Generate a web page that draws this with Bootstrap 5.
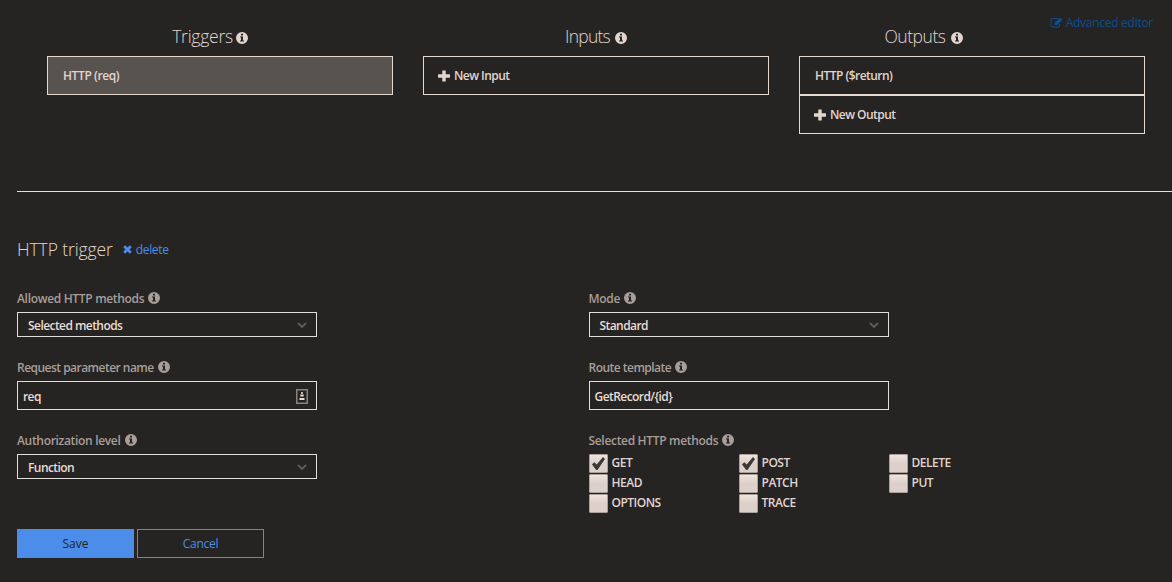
<!DOCTYPE html>
<html lang="en" data-bs-theme="dark">
<head>
<meta charset="utf-8">
<meta name="viewport" content="width=device-width, initial-scale=1">
<title>Function integration</title>
<link href="https://cdn.jsdelivr.net/npm/bootstrap@5.3.0/dist/css/bootstrap.min.css" rel="stylesheet">
<style>
body{background:#252422;color:#e2d5cf;font-family:"Open Sans","Noto Sans",sans-serif;font-size:12px;line-height:16px;height:582px;overflow:hidden}
svg{display:block;flex:none;fill:currentColor}
a{text-decoration:none}
.top-pane{height:191px;padding:25px 27px 0 47px}
.top-grid{display:grid;grid-template-columns:repeat(3,346px);gap:30px}
.col-title{font-size:17.5px;font-weight:300;line-height:22px;height:22px;margin:0 0 9px;color:#e2d5cf}
.col-title svg{margin-top:4px}
.triggers{letter-spacing:-.25px;gap:3px;padding-right:20px}
.inputs{letter-spacing:-.75px;gap:5px}
.outputs{letter-spacing:-.45px;gap:5px;padding-right:97px}
.slot{height:39px;border:1px solid #e6d9d0;padding:0 15px;gap:4px;font-weight:600;color:#e2d5cf;letter-spacing:-.53px}
.slot svg{margin-left:-1px}
.slot:hover{color:#fff}
.slot.active{background:#595350;letter-spacing:-.4px}
.adv{position:absolute;right:19px;top:15px;color:#0a4f94;gap:3px;letter-spacing:-.27px}
.rule{height:1px;background:#e9dcd4;margin-left:17px}
.lower{padding:45px 0 0 17px}
.sec-title{font-size:17.5px;font-weight:300;line-height:24px;letter-spacing:-.1px;margin:0;color:#e2d5cf}
.accent{color:#4b8de8}
.del{gap:4px;margin:1px 0 0 10px;letter-spacing:-.35px}
.form-grid{display:grid;grid-template-columns:571.5px 300px;margin-top:30px}
.lab{font-weight:600;color:#a89e99;height:16px;gap:4px;margin-bottom:5px;letter-spacing:-.32px}
.lab svg{margin-top:-2px}
.lab.tight{letter-spacing:-.52px}
.box{width:300px;border:1px solid #e0dedb;color:#e9dcd4;font-weight:600;letter-spacing:-.56px}
.sel{height:25px;padding:2px 9px 0 10px;margin-bottom:23px}
.inp{height:29px;padding:3px 8px 0 5px;margin-bottom:23px}
.inp svg{margin-top:-2px}
.checks{display:grid;grid-template-columns:repeat(3,150px);grid-auto-rows:20px}
.tick{width:19px;height:19px;border:1px solid #aaa09c;border-radius:1px;background:linear-gradient(#efe3dc,#ddd0cb 50%,#ddd0cb);color:#3b3938}
.opt{gap:4px;font-weight:600;letter-spacing:-.5px;line-height:18px}
.actions{margin-top:15px;gap:3px}
.act{height:29px;border-radius:0;border:1px solid #4b8de8;padding:0;font-size:12px;line-height:27px}
.save{width:117px;background:#4b8de8;color:#252422}
.cancel{width:127px;color:#4b8de8;letter-spacing:-.3px}
</style>
</head>
<body>
<svg width="0" height="0" class="position-absolute">
<symbol id="info" viewBox="0 0 12 12"><path fill-rule="evenodd" d="M6 0a6 6 0 1 1 0 12A6 6 0 0 1 6 0ZM5 1.800v1.700h2V1.800ZM4 4.500v1h1V8.500H4v1h4v-1H7v-4Z"/></symbol>
<symbol id="plus" viewBox="0 0 12 12"><path d="M4.300.5h3.400v3.800H11.500a.5.5 0 0 1 .5.500v2.400a.5.5 0 0 1-.5.500H7.700v3.800H4.300V7.700H.5a.5.5 0 0 1-.5-.5V4.800a.5.5 0 0 1 .5-.5h3.800Z"/></symbol>
<symbol id="chev" viewBox="0 0 10 7"><path d="M1 1l4 4 4-4" fill="none" stroke="#625c59" stroke-width="1.800"/></symbol>
<symbol id="check" viewBox="0 0 13 13"><path d="M0 7.500 2.200 5.200l2.500 2.300L11 0l2 2L5.500 13H4.200Z"/></symbol>
</svg>
<main class="position-relative">
<a class="adv d-flex align-items-center" href="#"><svg width="13" height="12" viewBox="0 0 13 12"><path d="M8 1.500H2.500A1.500 1.500 0 0 0 1 3v5.500A1.500 1.500 0 0 0 2.500 10H8a1.500 1.500 0 0 0 1.500-1.500V7" fill="none" stroke="currentColor"/><path d="m4.500 8 .4-2.500L10 .6 12.400 3 7.200 8Z"/></svg>Advanced editor</a>
<section class="top-pane"><div class="top-grid">
<div><h2 class="col-title triggers d-flex align-items-center justify-content-center">Triggers <svg width="12" height="12"><use href="#info"/></svg></h2>
<a class="slot active d-flex align-items-center" href="#">HTTP (req)</a></div>
<div><h2 class="col-title inputs d-flex align-items-center justify-content-center">Inputs <svg width="12" height="12"><use href="#info"/></svg></h2>
<a class="slot d-flex align-items-center" href="#"><svg width="12" height="12"><use href="#plus"/></svg>New Input</a></div>
<div><h2 class="col-title outputs d-flex align-items-center justify-content-center">Outputs <svg width="12" height="12"><use href="#info"/></svg></h2>
<a class="slot d-flex align-items-center" href="#">HTTP ($return)</a>
<a class="slot d-flex align-items-center" href="#"><svg width="12" height="12"><use href="#plus"/></svg>New Output</a></div>
</div></section>
<div class="rule"></div>
<section class="lower">
<div class="d-flex align-items-center"><h1 class="sec-title">HTTP trigger</h1><a class="accent del d-flex align-items-center" href="#"><svg width="9" height="9" viewBox="0 0 9 9"><path d="M1.200 1.200 7.800 7.800M7.800 1.200 1.200 7.800" stroke="currentColor" stroke-width="2.800"/></svg>delete</a></div>
<div class="form-grid">
<div>
<div class="lab d-flex align-items-center">Allowed HTTP methods <svg width="12" height="12"><use href="#info"/></svg></div>
<div class="box sel d-flex align-items-center justify-content-between">Selected methods<svg width="10" height="7"><use href="#chev"/></svg></div>
<div class="lab tight d-flex align-items-center">Request parameter name <svg width="12" height="12"><use href="#info"/></svg></div>
<div class="box inp d-flex align-items-center justify-content-between">req<svg width="12" height="15" viewBox="0 0 12 15" fill="#8a827e"><path d="M.75.75h10.500v13.500H.75Z" fill="none" stroke="#8a827e" stroke-width="1.500"/><path d="M5.200 3h1.600v2H5.200ZM4.300 5.500h3.400v2H4.300ZM3.500 9h5v2h-5Z"/></svg></div>
<div class="lab d-flex align-items-center">Authorization level <svg width="12" height="12"><use href="#info"/></svg></div>
<div class="box sel d-flex align-items-center justify-content-between">Function<svg width="10" height="7"><use href="#chev"/></svg></div>
</div>
<div>
<div class="lab d-flex align-items-center">Mode <svg width="12" height="12"><use href="#info"/></svg></div>
<div class="box sel d-flex align-items-center justify-content-between">Standard<svg width="10" height="7"><use href="#chev"/></svg></div>
<div class="lab tight d-flex align-items-center">Route template <svg width="12" height="12"><use href="#info"/></svg></div>
<div class="box inp d-flex align-items-center">GetRecord/{id}</div>
<div class="lab d-flex align-items-center">Selected HTTP methods <svg width="12" height="12"><use href="#info"/></svg></div>
<div class="checks">
<div class="opt d-flex"><span class="tick d-flex align-items-center justify-content-center"><svg width="13" height="13"><use href="#check"/></svg></span>GET</div>
<div class="opt d-flex"><span class="tick d-flex align-items-center justify-content-center"><svg width="13" height="13"><use href="#check"/></svg></span>POST</div>
<div class="opt d-flex"><span class="tick"></span>DELETE</div>
<div class="opt d-flex"><span class="tick"></span>HEAD</div>
<div class="opt d-flex"><span class="tick"></span>PATCH</div>
<div class="opt d-flex"><span class="tick"></span>PUT</div>
<div class="opt d-flex"><span class="tick"></span>OPTIONS</div>
<div class="opt d-flex"><span class="tick"></span>TRACE</div>
</div>
</div>
</div>
<div class="actions d-flex"><button class="btn act save">Save</button><button class="btn act cancel">Cancel</button></div>
</section>
</main>
<script src="https://cdn.jsdelivr.net/npm/bootstrap@5.3.0/dist/js/bootstrap.bundle.min.js"></script>
</body>
</html>
